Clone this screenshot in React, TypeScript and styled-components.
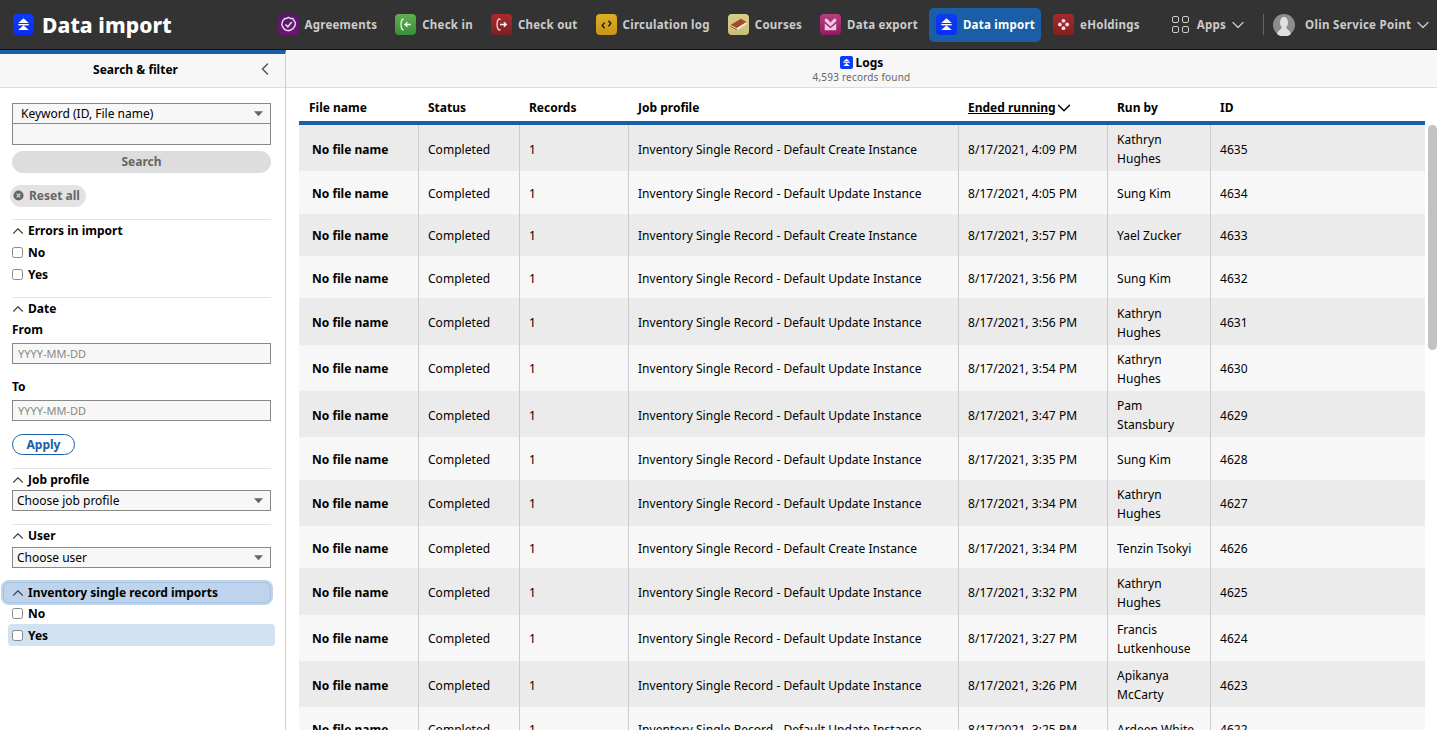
import React from "react";
import styled, {createGlobalStyle} from "styled-components";
import {ChevronDown, ChevronLeft, ChevronUp} from "lucide-react";

const GlobalStyle = createGlobalStyle`
  html, body {
    margin: 0;
    height: 100%;
    overflow: hidden;
  }
  body {
    font-family: "Noto Sans", "Liberation Sans", sans-serif;
    font-size: 12px;
    color: #000;
    background: #fff;
  }
  * {
    box-sizing: border-box;
  }
`;

const rows = [
    ["Inventory Single Record - Default Create Instance", "8/17/2021, 4:09 PM", "Kathryn Hughes", "4635"],
    ["Inventory Single Record - Default Update Instance", "8/17/2021, 4:05 PM", "Sung Kim", "4634"],
    ["Inventory Single Record - Default Create Instance", "8/17/2021, 3:57 PM", "Yael Zucker", "4633"],
    ["Inventory Single Record - Default Update Instance", "8/17/2021, 3:56 PM", "Sung Kim", "4632"],
    ["Inventory Single Record - Default Update Instance", "8/17/2021, 3:56 PM", "Kathryn Hughes", "4631"],
    ["Inventory Single Record - Default Update Instance", "8/17/2021, 3:54 PM", "Kathryn Hughes", "4630"],
    ["Inventory Single Record - Default Update Instance", "8/17/2021, 3:47 PM", "Pam Stansbury", "4629"],
    ["Inventory Single Record - Default Update Instance", "8/17/2021, 3:35 PM", "Sung Kim", "4628"],
    ["Inventory Single Record - Default Update Instance", "8/17/2021, 3:34 PM", "Kathryn Hughes", "4627"],
    ["Inventory Single Record - Default Create Instance", "8/17/2021, 3:34 PM", "Tenzin Tsokyi", "4626"],
    ["Inventory Single Record - Default Update Instance", "8/17/2021, 3:32 PM", "Kathryn Hughes", "4625"],
    ["Inventory Single Record - Default Update Instance", "8/17/2021, 3:27 PM", "Francis Lutkenhouse", "4624"],
    ["Inventory Single Record - Default Update Instance", "8/17/2021, 3:26 PM", "Apikanya McCarty", "4623"],
    ["Inventory Single Record - Default Update Instance", "8/17/2021, 3:25 PM", "Ardeen White", "4622"],
];

const ImportGlyph = () => (
    <svg viewBox="0 0 22 22" width="100%" height="100%">
        <path d="M11 4.5 L16.5 9.5 H5.5 Z" fill="#fff"/>
        <rect x="5.5" y="10.5" width="11" height="1.4" fill="#fff"/>
        <path d="M11 11.8 L16.5 16.8 H5.5 Z" fill="#fff"/>
    </svg>
);

const apps = [
    {
        name: "Agreements",
        bg: "linear-gradient(#541a66, #6c1470)",
        glyph: (
            <svg viewBox="0 0 22 22" width="100%" height="100%" fill="none" stroke="#e6d3ea" strokeWidth="1.6">
                <path d="M11 3.6 L13 4.6 L15.6 4.8 L16.8 7 L18.2 9 L18 11.4 L17 13.6 L15.4 15.6 L13.2 16.8 L11 17.6 L8.6 17 L6.4 15.6 L5 13.6 L4 11.2 L4.4 8.8 L5.4 6.6 L7.4 4.8 L9 4.6 Z"/>
                <path d="M7.8 11 L10.3 13.4 L14.4 8.4" strokeWidth="1.8"/>
            </svg>
        ),
    },
    {
        name: "Check in",
        bg: "linear-gradient(#62ad50, #37903a)",
        glyph: (
            <svg viewBox="0 0 22 22" width="100%" height="100%" fill="none" stroke="#fff" strokeWidth="1.4">
                <path d="M9 5.5 H7.8 C6.8 6.5 6.3 8.5 6.3 11 C6.3 13.5 6.8 15.5 7.8 16.5 H9" stroke="#e4f2e0"/>
                <path d="M16.5 11 H10.5 M13 8.5 L10.5 11 L13 13.5"/>
            </svg>
        ),
    },
    {
        name: "Check out",
        bg: "linear-gradient(#ab2a2e, #7c2023)",
        glyph: (
            <svg viewBox="0 0 22 22" width="100%" height="100%" fill="none" stroke="#fff" strokeWidth="1.4">
                <path d="M10 5.5 H7.8 C6.8 6.5 6.3 8.5 6.3 11 C6.3 13.5 6.8 15.5 7.8 16.5 H10" stroke="#f0d8d8"/>
                <path d="M9.5 11 H16 M13.5 8.5 L16 11 L13.5 13.5"/>
            </svg>
        ),
    },
    {
        name: "Circulation log",
        bg: "linear-gradient(#dcae22, #c9961a)",
        glyph: (
            <svg viewBox="0 0 22 22" width="100%" height="100%" fill="none" stroke="#1c1c1c" strokeWidth="1.5">
                <path d="M9 9 L6.5 12 L9 15"/>
                <path d="M13 7 L15.5 10 L13 13"/>
            </svg>
        ),
    },
    {
        name: "Courses",
        bg: "linear-gradient(#d6cf8b, #c9c077)",
        glyph: (
            <svg viewBox="0 0 22 22" width="100%" height="100%">
                <path d="M2.5 11.5 L13.5 5 L19.5 8.5 L9 15 Z" fill="#a8482a"/>
                <path d="M2.5 11.5 L9 15 L19.5 8.5 V10.5 L9.5 17 L3 14 Z" fill="#f0ece0"/>
                <path d="M2.5 13 L9.3 16.4" stroke="#8c3a22" strokeWidth="1"/>
            </svg>
        ),
    },
    {
        name: "Data export",
        bg: "linear-gradient(#b83d82, #8e1c62)",
        glyph: (
            <svg viewBox="0 0 22 22" width="100%" height="100%" fill="#f0c9de">
                <path d="M5 5 H7.5 L11 8.8 L14.5 5 H17 V7.5 L11 13.2 L5 7.5 Z"/>
                <path d="M5 10 L11 15 L17 10 V17 H5 Z"/>
            </svg>
        ),
    },
    {
        name: "Data import",
        bg: "linear-gradient(#0a3cf5, #0a2ef0)",
        glyph: <ImportGlyph/>,
        active: true,
    },
    {
        name: "eHoldings",
        bg: "linear-gradient(#a32a2e, #83201f)",
        glyph: (
            <svg viewBox="0 0 22 22" width="100%" height="100%" fill="#f2dcdc">
                <circle cx="11" cy="7.2" r="2"/>
                <circle cx="7.2" cy="11" r="2"/>
                <circle cx="14.8" cy="11" r="2"/>
                <circle cx="11" cy="14.8" r="2"/>
            </svg>
        ),
    },
];

const Caret = () => (
    <SelectCaret viewBox="0 0 10 6">
        <path d="M0 0 H10 L5 5.5 Z" fill="#666"/>
    </SelectCaret>
);

const Section = ({title, children}: { title: string; children: React.ReactNode }) => (
    <FilterGroup>
        <FilterTitle>
            <FoldIcon size={18} strokeWidth={1.5} color="#444"/>
            <span>{title}</span>
        </FilterTitle>
        {children}
    </FilterGroup>
);

const Check = ({label, $hl}: { label: string; $hl?: boolean }) => (
    <CheckRow $hl={$hl}>
        <CheckBox/>
        <span>{label}</span>
    </CheckRow>
);

export default function App() {
    return (
        <Page>
            <GlobalStyle/>
            <TopBar>
                <Brand>
                    <BrandIcon><ImportGlyph/></BrandIcon>
                    <BrandName>Data import</BrandName>
                </Brand>
                <AppList>
                    {apps.map((app) => (
                        <AppItem key={app.name} $active={app.active}>
                            <AppIcon $bg={app.bg}>{app.glyph}</AppIcon>
                            <span>{app.name}</span>
                        </AppItem>
                    ))}
                </AppList>
                <AppsMenu>
                    <AppsGrid>
                        <i/><i/><i/><i/>
                    </AppsGrid>
                    <span>Apps</span>
                    <MenuChevron size={20} strokeWidth={1.5}/>
                </AppsMenu>
                <Divider/>
                <Profile>
                    <Avatar>
                        <svg viewBox="0 0 22 22" width="22" height="22">
                            <circle cx="11" cy="11" r="11" fill="#8d8d8d"/>
                            <ellipse cx="11" cy="8.5" rx="4" ry="5.8" fill="#e0e0e0"/>
                            <path d="M4 20 C5 16 8.5 15.5 9 13 H13 C13.5 15.5 17 16 18 20 A11 11 0 0 1 4 20 Z" fill="#e0e0e0"/>
                        </svg>
                    </Avatar>
                    <span>Olin Service Point</span>
                    <MenuChevron size={20} strokeWidth={1.5}/>
                </Profile>
            </TopBar>
            <Main>
                <Sidebar>
                    <PaneHeader>
                        <PaneTitle>Search &amp; filter</PaneTitle>
                        <CollapseButton><ChevronLeft size={20} strokeWidth={1.8} color="#555"/></CollapseButton>
                    </PaneHeader>
                    <SidebarBody>
                        <SearchSelect>
                            <span>Keyword (ID, File name)</span>
                            <Caret/>
                        </SearchSelect>
                        <SearchInput/>
                        <SearchButton>Search</SearchButton>
                        <ResetButton>
                            <svg viewBox="0 0 12 12" width="11" height="11">
                                <circle cx="6" cy="6" r="5.5" fill="#666"/>
                                <path d="M4 4 L8 8 M8 4 L4 8" stroke="#ddd" strokeWidth="1.4"/>
                            </svg>
                            Reset all
                        </ResetButton>
                        <Section title="Errors in import">
                            <Check label="No"/>
                            <Check label="Yes"/>
                        </Section>
                        <Section title="Date">
                            <FieldLabel $top={2}>From</FieldLabel>
                            <DateInput>YYYY-MM-DD</DateInput>
                            <FieldLabel $top={14}>To</FieldLabel>
                            <DateInput>YYYY-MM-DD</DateInput>
                            <ApplyButton>Apply</ApplyButton>
                        </Section>
                        <Section title="Job profile">
                            <SelectBox>
                                <span>Choose job profile</span>
                                <Caret/>
                            </SelectBox>
                        </Section>
                        <Section title="User">
                            <SelectBox $top={1}>
                                <span>Choose user</span>
                                <Caret/>
                            </SelectBox>
                        </Section>
                        <FocusedTitle>
                            <FoldIcon size={18} strokeWidth={1.5} color="#444"/>
                            <span>Inventory single record imports</span>
                        </FocusedTitle>
                        <Check label="No"/>
                        <Check label="Yes" $hl/>
                    </SidebarBody>
                </Sidebar>
                <Results>
                    <ResultsHeader>
                        <ResultsTitle>
                            <SmallIcon><ImportGlyph/></SmallIcon>
                            Logs
                        </ResultsTitle>
                        <ResultsCount>4,593 records found</ResultsCount>
                    </ResultsHeader>
                    <TableArea>
                        <Table>
                            <HeaderRow>
                                <HeadCell $first>File name</HeadCell>
                                <HeadCell>Status</HeadCell>
                                <HeadCell>Records</HeadCell>
                                <HeadCell>Job profile</HeadCell>
                                <HeadCell>
                                    <SortLabel>Ended running</SortLabel>
                                    <SortChevron size={22} strokeWidth={1.6} color="#000"/>
                                </HeadCell>
                                <HeadCell>Run by</HeadCell>
                                <HeadCell>ID</HeadCell>
                            </HeaderRow>
                            {rows.map((row, i) => (
                                <Row key={row[3]} $odd={i % 2 === 0}>
                                    <NameCell>No file name</NameCell>
                                    <Cell>Completed</Cell>
                                    <Cell>1</Cell>
                                    <Cell>{row[0]}</Cell>
                                    <Cell>{row[1]}</Cell>
                                    <RunByCell>{row[2]}</RunByCell>
                                    <LastCell>{row[3]}</LastCell>
                                </Row>
                            ))}
                        </Table>
                        <ScrollThumb/>
                    </TableArea>
                </Results>
            </Main>
        </Page>
    );
}

const Page = styled.div`
  width: 100%;
  height: 100vh;
  display: flex;
  flex-direction: column;
  overflow: hidden;
`;

const TopBar = styled.header`
  height: 50px;
  flex: none;
  display: flex;
  align-items: center;
  background: #333;
  border-bottom: 1px solid #111;
  color: #ccc;
`;

const Brand = styled.div`
  width: 270.5px;
  flex: none;
  display: flex;
  align-items: center;
  gap: 8px;
  padding-left: 13px;
`;

const BrandIcon = styled.div`
  width: 21px;
  height: 21px;
  border-radius: 4px;
  background: linear-gradient(#0a3cf5, #0a2ef0);
`;

const BrandName = styled.div`
  font-size: 21px;
  font-weight: 800;
  letter-spacing: 0.1px;
  color: #fff;
`;

const AppList = styled.nav`
  display: flex;
  align-items: center;
`;

const AppItem = styled.div<{ $active?: boolean }>`
  height: 34px;
  display: flex;
  align-items: center;
  gap: 6px;
  padding: 0 6px 0 7px;
  margin-right: 5px;
  border-radius: 5px;
  font-weight: 700;
  font-size: 11.5px;
  letter-spacing: 0.25px;
  background: ${({$active}) => ($active ? "#1a5ea6" : "transparent")};
  color: ${({$active}) => ($active ? "#fff" : "#ccc")};
`;

const AppIcon = styled.div<{ $bg: string }>`
  width: 21px;
  height: 21px;
  border-radius: 4px;
  background: ${({$bg}) => $bg};
`;

const AppsMenu = styled.div`
  display: flex;
  align-items: center;
  gap: 8px;
  margin-left: 21px;
  font-weight: 700;
  font-size: 11.5px;
  letter-spacing: 0.25px;
`;

const MenuChevron = styled(ChevronDown)`
  margin-left: -6px;
`;

const AppsGrid = styled.div`
  display: grid;
  grid-template-columns: 7px 7px;
  gap: 3px;

  i {
    height: 7px;
    border: 1.5px solid #ccc;
    border-radius: 2px;
  }
`;

const Divider = styled.div`
  width: 1px;
  height: 21px;
  background: #666;
  margin-left: 15px;
`;

const Profile = styled.div`
  display: flex;
  align-items: center;
  gap: 10px;
  margin-left: 9px;
  font-weight: 700;
  font-size: 11.5px;
  letter-spacing: 0.3px;

  ${MenuChevron} {
    margin-left: -8px;
  }
`;

const Avatar = styled.div`
  width: 22px;
  height: 22px;
`;

const Main = styled.div`
  flex: 1;
  display: flex;
  min-height: 0;
`;

const Sidebar = styled.aside`
  width: 286px;
  flex: none;
  border-right: 1px solid #ccc;
  border-top: 4px solid #1a5ea6;
`;

const PaneHeader = styled.div`
  height: 34px;
  position: relative;
  display: flex;
  align-items: center;
  justify-content: center;
  padding: 0 14px 2px 0;
  background: #f7f7f7;
  border-bottom: 1px solid #ddd;
`;

const PaneTitle = styled.div`
  font-weight: 700;
`;

const CollapseButton = styled.div`
  position: absolute;
  right: 10px;
  top: 5px;
  height: 20px;
`;

const SidebarBody = styled.div`
  padding: 15px 14px 0 12px;
`;

const SearchSelect = styled.div`
  height: 21px;
  display: flex;
  align-items: center;
  justify-content: space-between;
  padding: 0 7px 0 8px;
  background: #f7f7f7;
  border: 1px solid #888;
`;

const SelectCaret = styled.svg`
  width: 9px;
  height: 6px;
`;

const SearchInput = styled.div`
  height: 22px;
  margin-top: -1px;
  background: #f7f7f7;
  border: 1px solid #888;
`;

const SearchButton = styled.div`
  height: 22px;
  margin-top: 6px;
  padding-bottom: 1px;
  border-radius: 11px;
  background: #ddd;
  color: #666;
  font-weight: 700;
  display: flex;
  align-items: center;
  justify-content: center;
`;

const ResetButton = styled.div`
  display: inline-flex;
  align-items: center;
  gap: 5px;
  height: 22px;
  margin: 12px 0 12px -2px;
  padding: 0 6px 1px 3px;
  border-radius: 11px;
  background: #e3e3e3;
  color: #666;
  font-weight: 700;
`;

const FilterGroup = styled.section`
  border-top: 1px solid #e4e4e4;
  padding-bottom: 12px;
`;

const FilterTitle = styled.div`
  height: 21px;
  display: flex;
  align-items: center;
  gap: 4px;
  font-weight: 700;
  padding-left: 1px;
`;

const FoldIcon = styled(ChevronUp)`
  margin-left: -4.5px;
  margin-right: -2.5px;
`;

const CheckRow = styled.div<{ $hl?: boolean }>`
  height: 22px;
  display: flex;
  align-items: center;
  gap: 5px;
  font-weight: 700;
  margin: 0 ${({$hl}) => ($hl ? "-4px" : "0")};
  padding: 0 ${({$hl}) => ($hl ? "4px" : "0")};
  border-radius: 4px;
  background: ${({$hl}) => ($hl ? "#d1e3f2" : "transparent")};
`;

const CheckBox = styled.span`
  width: 11px;
  height: 11px;
  background: #fff;
  border: 1px solid #888;
  border-radius: 2.5px;
`;

const FieldLabel = styled.div<{ $top?: number }>`
  font-weight: 700;
  margin-top: ${({$top}) => $top ?? 0}px;
  margin-bottom: 5px;
`;

const DateInput = styled.div`
  height: 21px;
  display: flex;
  align-items: center;
  padding-left: 5px;
  background: #f7f7f7;
  border: 1px solid #888;
  color: #888;
  font-size: 11px;
`;

const ApplyButton = styled.div`
  width: 63px;
  height: 21px;
  margin-top: 13px;
  margin-bottom: 1px;
  border: 1.5px solid #1a5ea6;
  border-radius: 11px;
  color: #1a5ea6;
  font-weight: 700;
  display: flex;
  align-items: center;
  justify-content: center;
`;

const SelectBox = styled(SearchSelect)<{ $top?: number }>`
  padding-left: 4px;
  margin-top: ${({$top}) => $top ?? 0}px;
  margin-bottom: 1px;
`;

const FocusedTitle = styled.div`
  height: 21px;
  margin: 1px 0 -1px -9px;
  padding-left: 9px;
  display: flex;
  align-items: center;
  gap: 4px;
  font-weight: 700;
  background: #bdd4ec;
  border: 1px solid #a6c3e0;
  border-radius: 6px;
  box-shadow: 0 0 0 2px #bdd4ec;
`;

const Results = styled.div`
  flex: 1;
  min-width: 0;
  display: flex;
  flex-direction: column;
`;

const ResultsHeader = styled.div`
  height: 38px;
  flex: none;
  display: flex;
  flex-direction: column;
  align-items: center;
  justify-content: center;
  background: #f7f7f7;
  border-bottom: 1px solid #ddd;
`;

const ResultsTitle = styled.div`
  display: flex;
  align-items: center;
  gap: 3px;
  font-weight: 700;
  line-height: 16px;
`;

const SmallIcon = styled.div`
  width: 13px;
  height: 13px;
  border-radius: 2px;
  background: #0a3cf5;
`;

const ResultsCount = styled.div`
  font-size: 10px;
  line-height: 12px;
  letter-spacing: 0.2px;
  color: #666;
`;

const TableArea = styled.div`
  position: relative;
  flex: 1;
  min-height: 0;
  overflow: hidden;
  padding-left: 13px;
`;

const Table = styled.div`
  width: 1126px;
`;

const columns = "120px 101px 109px 330px 149px 103px 214px";

const HeaderRow = styled.div`
  height: 37px;
  display: grid;
  grid-template-columns: ${columns};
  align-items: center;
  padding-top: 6px;
  border-bottom: 4px solid #1a5ea6;
`;

const HeadCell = styled.div<{ $first?: boolean }>`
  display: flex;
  align-items: center;
  height: 20px;
  gap: 2px;
  padding-left: ${({$first}) => ($first ? "10px" : "9px")};
  font-weight: 700;
`;

const SortLabel = styled.span`
  text-decoration: underline;
`;

const SortChevron = styled(ChevronDown)`
  margin-left: -4.5px;
`;

const Row = styled.div<{ $odd: boolean }>`
  min-height: 42.4px;
  display: grid;
  grid-template-columns: ${columns};
  background: ${({$odd}) => ($odd ? "#ebebeb" : "#f7f7f7")};
`;

const Cell = styled.div`
  display: flex;
  align-items: center;
  padding: 5.15px 9px 3.15px;
  border-right: 1px solid #ccc;
  line-height: 19px;
  letter-spacing: 0.04px;
`;

const NameCell = styled(Cell)`
  padding-left: 13px;
  font-weight: 700;
  letter-spacing: 0;
`;

const RunByCell = styled(Cell)`
  padding-right: 12px;
`;

const LastCell = styled(Cell)`
  border-right: 0;
`;

const ScrollThumb = styled.div`
  position: absolute;
  left: 1142px;
  top: 37px;
  width: 9px;
  height: 225px;
  border-radius: 5px;
  background: #c2c2c2;
`;
